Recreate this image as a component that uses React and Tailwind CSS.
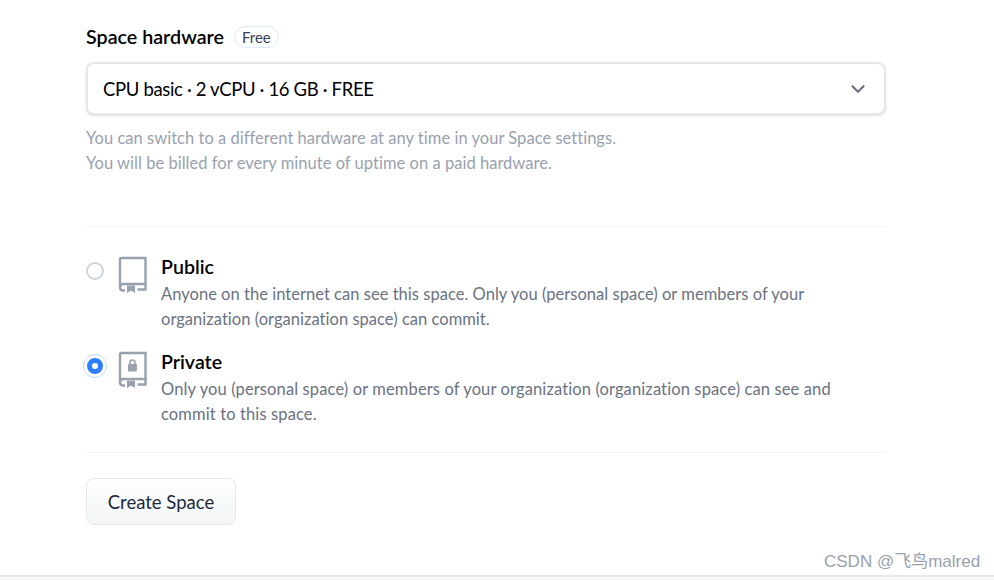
import React from 'react';
import { ChevronDown } from 'lucide-react';

function BookIcon({ locked }) {
  return (
    <svg width="32" height="38" viewBox="0 0 32 38" fill="none" className="text-gray-400">
      <path d="M3 31.5V3.5C3 2.5 3.5 2 4.5 2H28.5V28H6.5C4.5 28 3 29.5 3 31.5C3 33.5 4.5 34.5 6.5 34.5H8" stroke="currentColor" strokeWidth="2.4" />
      <path d="M10 29.5H18V37L14 34.5L10 37Z" fill="currentColor" />
      <path d="M20.5 33.5H28.5V28" stroke="currentColor" strokeWidth="2.4" />
      {locked && (
        <>
          <rect x="11" y="13" width="9" height="7.5" rx="1" fill="currentColor" />
          <path d="M13 13.5V11.5C13 10 14 9 15.5 9C17 9 18 10 18 11.5V13.5" stroke="currentColor" strokeWidth="1.6" />
        </>
      )}
    </svg>
  );
}

function VisibilityOption({ title, lines, checked }) {
  return (
    <div className="flex items-start">
      <div className="w-[31px] pt-[7px] flex justify-start">
        {checked ? (
          <span className="ml-px mt-px w-[16px] h-[16px] rounded-full border-[5px] border-blue-500 bg-white outline outline-1 outline-offset-[3px] outline-blue-200"></span>
        ) : (
          <span className="w-[18px] h-[18px] rounded-full border-2 border-gray-300 bg-white"></span>
        )}
      </div>
      <div className="w-[44px] mt-[1px] h-[25px] shrink-0">
        <BookIcon locked={checked} />
      </div>
      <div>
        <div className="text-[19.6px] leading-[24px] font-semibold text-black">{title}</div>
        <div className={`text-[16.5px] leading-[25px] mt-[3px] text-gray-500 ${checked ? 'tracking-[0.12px]' : 'tracking-[0.03px]'}`}>
          {lines.map((l) => (
            <div key={l}>{l}</div>
          ))}
        </div>
      </div>
    </div>
  );
}

export default function App() {
  return (
    <div className="relative w-[994px] h-[580px] bg-white overflow-hidden font-['Lato','Noto_Sans',sans-serif]">
      <div className="w-[800px] ml-[86px] pt-[25px]">
        <div className="flex items-center h-[24px]">
          <span className="text-[19.7px] font-semibold text-black">Space hardware</span>
          <span className="ml-[10px] h-[22px] px-[7px] rounded-full border border-blue-100 text-[15px] leading-[20px] text-gray-700">Free</span>
        </div>
        <div className="mt-[13px] h-[53px] rounded-lg border-2 border-gray-200 bg-white flex items-center justify-between pl-[15px] pr-[15px] shadow-sm">
          <span className="pt-[2px] text-[18.5px] tracking-[-0.35px] text-black">CPU basic · 2 vCPU · 16 GB · FREE</span>
          <ChevronDown size={22} strokeWidth={2.4} className="text-gray-500" />
        </div>
        <div className="mt-[11px] text-[16.5px] leading-[25px] text-gray-400 tracking-[0.03px]">
          <div>You can switch to a different hardware at any time in your Space settings.</div>
          <div>You will be billed for every minute of uptime on a paid hardware.</div>
        </div>
        <div className="mt-[50px] border-t border-gray-100"></div>
        <div className="mt-[28px] flex flex-col gap-[18px]">
          <VisibilityOption
            title="Public"
            lines={[
              'Anyone on the internet can see this space. Only you (personal space) or members of your',
              'organization (organization space) can commit.',
            ]}
          />
          <VisibilityOption
            title="Private"
            checked
            lines={[
              'Only you (personal space) or members of your organization (organization space) can see and',
              'commit to this space.',
            ]}
          />
        </div>
        <div className="mt-[25px] border-t border-gray-100"></div>
        <button className="mt-[25px] w-[150px] h-[47px] pt-[2px] rounded-lg border border-gray-200 bg-gradient-to-b from-white to-gray-100 text-[18.5px] text-gray-800">
          Create Space
        </button>
      </div>
      <div className="absolute left-0 right-0 bottom-0 h-[5px] bg-gray-50 border-t-2 border-gray-200"></div>
      <div className="absolute left-[824px] top-[551px] text-[17px] leading-[22px] text-gray-400 font-['Liberation_Sans','Noto_Sans_CJK_SC',sans-serif]">
        CSDN @飞鸟malred
      </div>
    </div>
  );
}
